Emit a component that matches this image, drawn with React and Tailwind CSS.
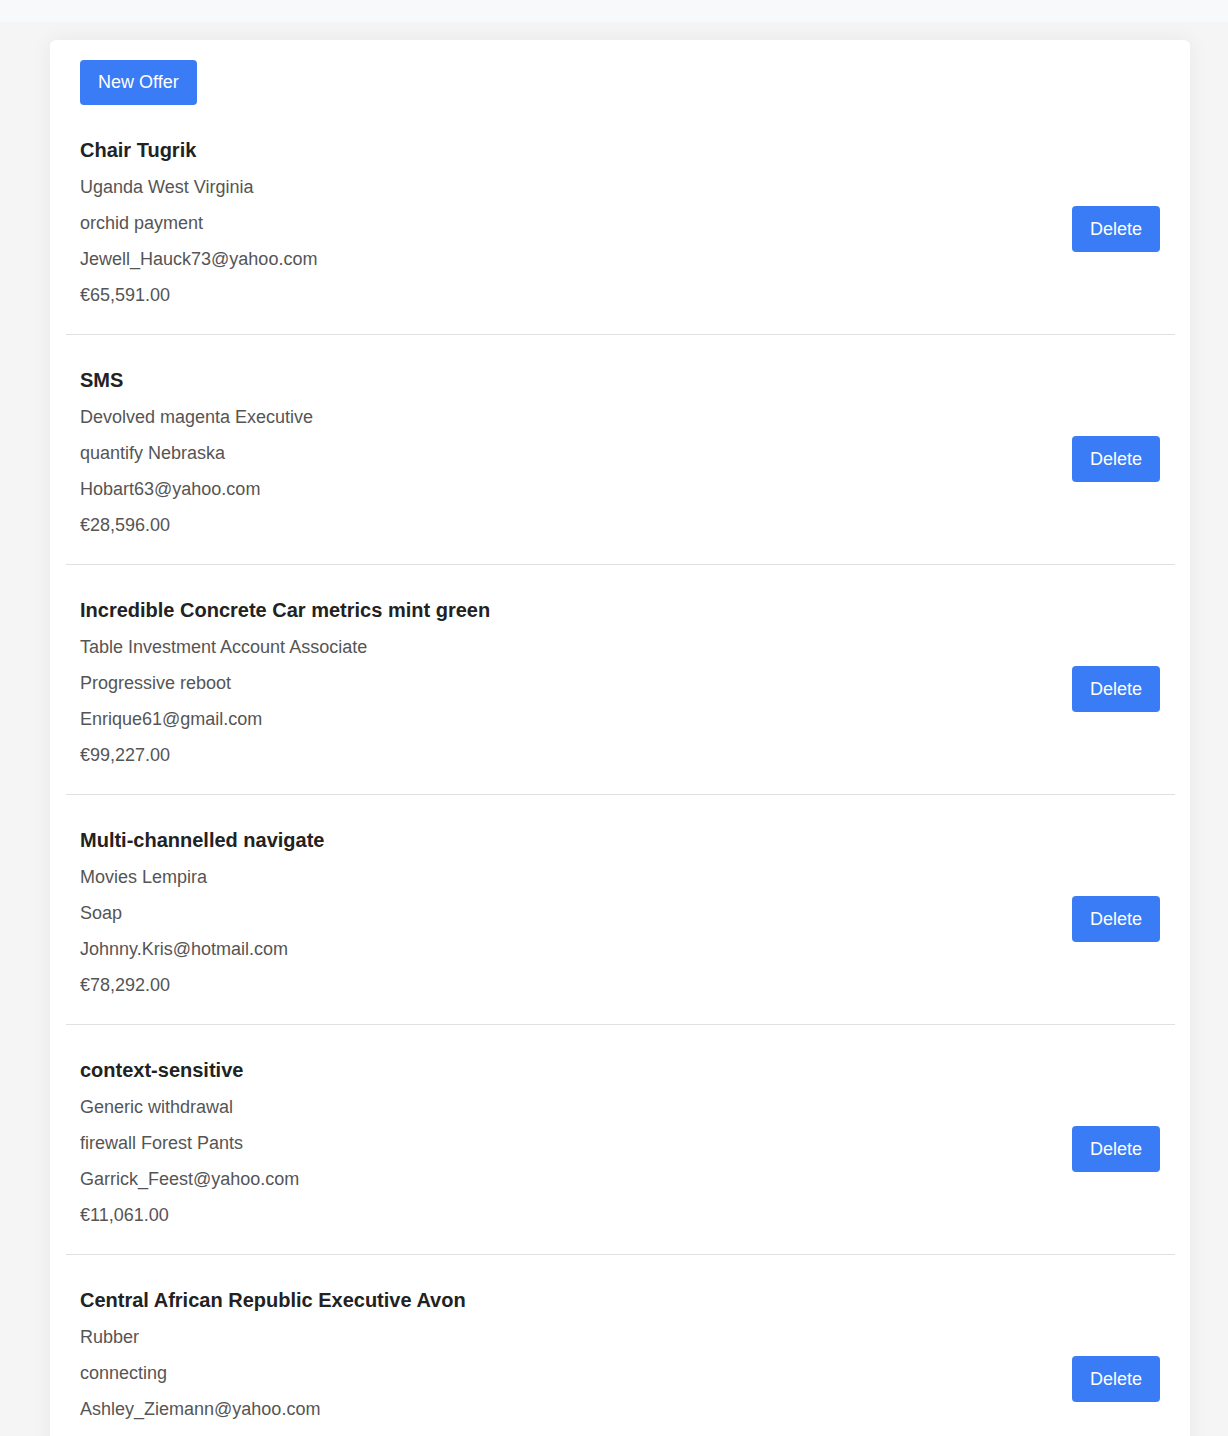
const offers = [
  { title: 'Chair Tugrik', lines: ['Uganda West Virginia', 'orchid payment', 'Jewell_Hauck73@yahoo.com'], price: '€65,591.00' },
  { title: 'SMS', lines: ['Devolved magenta Executive', 'quantify Nebraska', 'Hobart63@yahoo.com'], price: '€28,596.00' },
  { title: 'Incredible Concrete Car metrics mint green', lines: ['Table Investment Account Associate', 'Progressive reboot', 'Enrique61@gmail.com'], price: '€99,227.00' },
  { title: 'Multi-channelled navigate', lines: ['Movies Lempira', 'Soap', 'Johnny.Kris@hotmail.com'], price: '€78,292.00' },
  { title: 'context-sensitive', lines: ['Generic withdrawal', 'firewall Forest Pants', 'Garrick_Feest@yahoo.com'], price: '€11,061.00' },
  { title: 'Central African Republic Executive Avon', lines: ['Rubber', 'connecting', 'Ashley_Ziemann@yahoo.com'], price: '€42,310.00' },
]

function OfferRow({ offer }) {
  return (
    <li className="flex items-center justify-between border-b border-[#e0e0e0] pl-[14px] pr-[15px]">
      <div className="pt-[27px] pb-[21px]">
        <h3 className="mb-px text-[20px] font-bold leading-[36px] text-[#222]">{offer.title}</h3>
        {offer.lines.map((l) => (
          <p key={l} className="text-[18px] leading-[36px] text-[#555]">{l}</p>
        ))}
        <p className="text-[18px] leading-[36px] text-[#555]">{offer.price}</p>
      </div>
      <button className="mt-[19px] h-[46px] rounded bg-[#3a7bf6] px-[18px] text-[18px] text-white">
        Delete
      </button>
    </li>
  )
}

export default function App() {
  return (
    <div className="min-h-screen bg-[#f5f5f5] font-['Liberation_Sans',Arial,sans-serif]">
      <div className="h-[22px] bg-[#f8f9fa]" />
      <div className="pl-[50px] pr-[38px] pt-[18px]">
        <div className="rounded-md bg-white pt-[20px] pl-[16px] pr-[15px] shadow-[0_0_22px_rgba(0,0,0,0.06)]">
          <button className="ml-[14px] h-[45px] rounded bg-[#3a7bf6] px-[18px] text-[18px] text-white">
            New Offer
          </button>
          <ul>
            {offers.map((o) => (
              <OfferRow key={o.title} offer={o} />
            ))}
          </ul>
        </div>
      </div>
    </div>
  )
}
